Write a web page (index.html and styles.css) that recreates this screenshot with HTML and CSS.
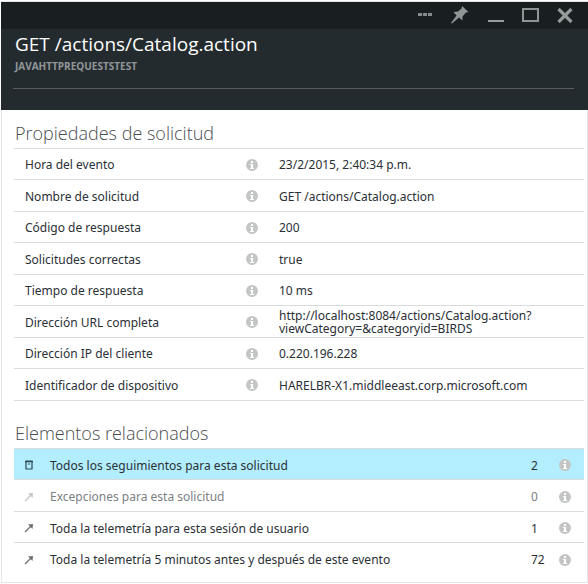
FILE: index.html
```html
<!DOCTYPE html>
<html lang="es">
<head>
<meta charset="utf-8">
<meta name="viewport" content="width=device-width, initial-scale=1">
<title>GET /actions/Catalog.action</title>
<link rel="stylesheet" href="styles.css">
</head>
<body>
<svg class="defs" aria-hidden="true">
  <symbol id="info" viewBox="0 0 12 12">
    <circle cx="6" cy="6" r="6" fill="#c4c5c5"/>
    <path d="M5 2h2v2H5zM4 5h3v4h1v1H4V9h1V6H4z" fill="#fff"/>
  </symbol>
  <symbol id="arrow" viewBox="0 0 10 10">
    <path d="M1 9 6.500 3.500" fill="none" stroke="currentColor" stroke-width="1.300"/>
    <path d="M4 1.500 9 1 8.500 6z" fill="currentColor"/>
  </symbol>
</svg>
<main class="blade">
  <header class="header">
    <div class="toolbar">
      <button type="button" class="tool" aria-label="Más"><svg width="14" height="16" viewBox="0 0 14 16"><path d="M0 5h4v3H0zM5 5h4v3H5zM10 5h4v3h-4z" fill="#858a8c"/></svg></button>
      <button type="button" class="tool" aria-label="Anclar"><svg width="18" height="18" viewBox="0 0 18 18"><path d="M11 -1 17.500 5 15 5.500 11.500 9.500 11.500 13.500 8 10.500 1 16.500 0 16 5.500 8.500 2.500 5 7 4.500 10.500 1.500z" fill="#8f9495"/></svg></button>
      <button type="button" class="tool" aria-label="Minimizar"><svg width="16" height="16" viewBox="0 0 16 16"><path d="M0 12h16v2H0z" fill="#959a9b"/></svg></button>
      <button type="button" class="tool" aria-label="Maximizar"><svg width="17" height="16" viewBox="0 0 17 16"><path d="M1 1h15v12H1z" fill="none" stroke="#8f9495" stroke-width="2"/></svg></button>
      <button type="button" class="tool" aria-label="Cerrar"><svg width="16" height="16" viewBox="0 0 16 16"><path d="M1.500 1 14.500 14M14.500 1 1.500 14" stroke="#959a9b" stroke-width="3.200"/></svg></button>
    </div>
    <div class="heading">
      <h1 class="title">GET /actions/Catalog.action</h1>
      <p class="subtitle">JAVAHTTPREQUESTSTEST</p>
    </div>
  </header>

  <section class="section">
    <h2 class="section-title">Propiedades de solicitud</h2>
    <table class="props">
      <tr><th scope="row">Hora del evento</th><td class="help"><button type="button" class="info" aria-label="Información"><svg><use href="#info"/></svg></button></td><td>23/2/2015, 2:40:34 p.m.</td></tr>
      <tr><th scope="row">Nombre de solicitud</th><td class="help"><button type="button" class="info" aria-label="Información"><svg><use href="#info"/></svg></button></td><td>GET /actions/Catalog.action</td></tr>
      <tr><th scope="row">Código de respuesta</th><td class="help"><button type="button" class="info" aria-label="Información"><svg><use href="#info"/></svg></button></td><td>200</td></tr>
      <tr><th scope="row">Solicitudes correctas</th><td class="help"><button type="button" class="info" aria-label="Información"><svg><use href="#info"/></svg></button></td><td>true</td></tr>
      <tr><th scope="row">Tiempo de respuesta</th><td class="help"><button type="button" class="info" aria-label="Información"><svg><use href="#info"/></svg></button></td><td>10 ms</td></tr>
      <tr><th scope="row">Dirección URL completa</th><td class="help"><button type="button" class="info" aria-label="Información"><svg><use href="#info"/></svg></button></td><td>http://localhost:8084/actions/Catalog.action?<br>viewCategory=&amp;categoryid=BIRDS</td></tr>
      <tr><th scope="row">Dirección IP del cliente</th><td class="help"><button type="button" class="info" aria-label="Información"><svg><use href="#info"/></svg></button></td><td>0.220.196.228</td></tr>
      <tr><th scope="row">Identificador de dispositivo</th><td class="help"><button type="button" class="info" aria-label="Información"><svg><use href="#info"/></svg></button></td><td>HARELBR-X1.middleeast.corp.microsoft.com</td></tr>
    </table>
  </section>

  <section class="section">
    <h2 class="section-title">Elementos relacionados</h2>
    <ul class="related">
      <li class="item selected"><a class="link" href="#"><svg class="mark" viewBox="0 0 10 10"><path d="M2 1h6v8H2z" fill="none" stroke="currentColor" stroke-width="1.200"/><path d="M1 1h8v1.200H1zM4 3.500h2v1H4z" fill="currentColor"/></svg><span class="name">Todos los seguimientos para esta solicitud</span><span class="count">2</span></a><button type="button" class="info" aria-label="Información"><svg><use href="#info"/></svg></button></li>
      <li class="item empty"><a class="link" href="#"><svg class="mark"><use href="#arrow"/></svg><span class="name">Excepciones para esta solicitud</span><span class="count">0</span></a><button type="button" class="info" aria-label="Información"><svg><use href="#info"/></svg></button></li>
      <li class="item"><a class="link" href="#"><svg class="mark"><use href="#arrow"/></svg><span class="name">Toda la telemetría para esta sesión de usuario</span><span class="count">1</span></a><button type="button" class="info" aria-label="Información"><svg><use href="#info"/></svg></button></li>
      <li class="item"><a class="link" href="#"><svg class="mark"><use href="#arrow"/></svg><span class="name">Toda la telemetría 5 minutos antes y después de este evento</span><span class="count">72</span></a><button type="button" class="info" aria-label="Información"><svg><use href="#info"/></svg></button></li>
    </ul>
  </section>
</main>
</body>
</html>
```
FILE: styles.css
```css
* {
  box-sizing: border-box;
}

body {
  margin: 0;
  background: #fff;
  color: #2b3036;
  font: 12px/13px "Noto Sans", "Open Sans", sans-serif;
}

h1, h2, p, ul {
  margin: 0;
  padding: 0;
}

button {
  display: block;
  padding: 0;
  border: 0;
  background: none;
}

svg {
  display: block;
  overflow: visible;
}

.defs {
  position: absolute;
  width: 0;
  height: 0;
}

.blade {
  margin: 1px 0 0 1px;
  border: 1px solid #e3e5e6;
  padding-bottom: 8px;
}

.header {
  margin: 0 -1px;
  padding-bottom: 21px;
  background: #242b2e;
}

.toolbar {
  display: flex;
  justify-content: flex-end;
  align-items: center;
  gap: 18px;
  height: 27px;
  padding-right: 15px;
  background: #191e21;
}

.tool:nth-child(-n+2) {
  margin-right: 1px;
}

.heading {
  margin: 0 14px 0 12px;
  padding: 0 2px 15px;
  border-bottom: 1px solid #585c5e;
}

.title {
  color: #fff;
  font: 400 19px/30px "Open Sans", "Noto Sans", sans-serif;
}

.subtitle {
  color: #92979a;
  font: 700 10px/14px "Open Sans", "Noto Sans", sans-serif;
}

.section {
  padding: 9px 3px 0 12px;
}

.section + .section {
  padding-top: 18px;
}

.section-title {
  padding: 0 0 1px 1px;
  color: #4a4d50;
  font: 300 18px/28px "Open Sans", "Noto Sans", sans-serif;
}

.props {
  width: 100%;
  border-collapse: collapse;
  table-layout: fixed;
  border-top: 1px solid #d9dbdd;
}

.props tr {
  height: 31px;
  border-bottom: 1px solid #d9dbdd;
}

.props tr:nth-child(even) {
  height: 32px;
}

.props th,
.props td {
  padding: 1px 0 0;
  text-align: left;
  vertical-align: middle;
  font-weight: 400;
}

.props th {
  width: 232px;
  padding-left: 11px;
}

.props .help {
  width: 33px;
}

.info svg {
  width: 12px;
  height: 12px;
}

.related {
  list-style: none;
}

.item {
  display: flex;
  align-items: center;
  height: 31px;
  padding: 2px 13px 0 10px;
  border-top: 1px solid #d9dbdd;
}

.item:nth-child(even) {
  height: 32px;
}

.selected {
  background: #b3eeff;
}

.link {
  display: flex;
  flex: 1;
  align-items: center;
  color: inherit;
  text-decoration: none;
}

.mark {
  width: 10px;
  height: 10px;
  margin-right: 16px;
  color: #6a6e71;
}

.selected .mark {
  color: #2b4a54;
}

.name {
  flex: 1;
}

.count {
  width: 28px;
}

.empty .link {
  color: #7c8083;
}

.empty .mark {
  color: #c4c6c8;
}
```
